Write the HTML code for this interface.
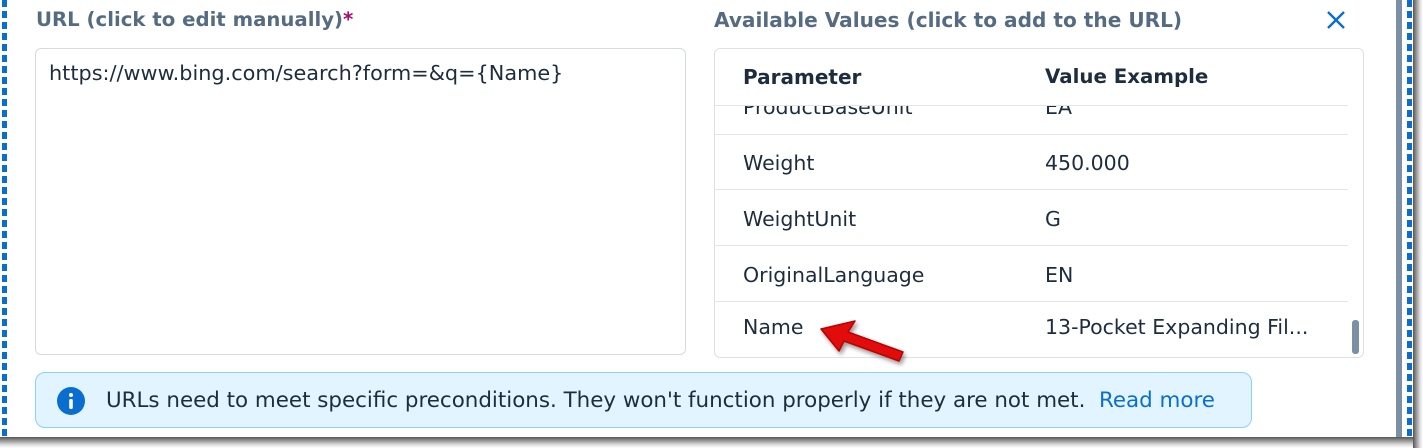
<!DOCTYPE html>
<html><head><style>
body{margin:0;width:1423px;height:448px;background:#fff;position:relative;overflow:hidden;font-family:"DejaVu Sans","Liberation Sans",sans-serif;color:#1d2d3e}
.a{position:absolute}
.dl{left:2px;top:0;width:5px;height:437px;background:repeating-linear-gradient(#0a6ed1 0 7px,#fff 7px 11px)}
.dr{left:1407px;top:0;width:5px;height:437px;background:repeating-linear-gradient(#0a6ed1 0 7px,#fff 7px 11px)}
.t{font-size:19.7px;font-weight:bold;color:#556b82;white-space:nowrap}
.row{position:absolute;left:0;width:633px;height:56px;border-bottom:1px solid #e5e5e5;font-size:20.5px}
.row span{position:absolute;top:17px}
</style></head><body>
<div class="a" style="left:0;top:437px;width:1423px;height:11px;background:linear-gradient(#555,#ddd 70%,#fff)"></div>
<div class="a" style="left:1413px;top:0;width:10px;height:448px;background:linear-gradient(90deg,#555,#ddd 70%,#fff)"></div>
<div class="a dl"></div>
<div class="a" style="left:1396px;top:0;width:6px;height:437px;background:#7b8fa5"></div>
<div class="a dr"></div>
<div class="a t" style="left:36px;top:8px">URL (click to edit manually)<span style="color:#aa0a6d">*</span></div>
<div class="a t" style="left:714px;top:8px;font-size:20.1px">Available Values (click to add to the URL)</div>
<svg class="a" style="left:1326px;top:10px" width="20" height="20"><path d="M2 2L18 18M18 2L2 18" stroke="#0a6ed1" stroke-width="2.4"/></svg>
<div class="a" style="left:35px;top:48px;width:649px;height:305px;border:1px solid #d5dadd;border-radius:6px"></div>
<div class="a" style="left:49px;top:61px;font-size:20.8px;white-space:nowrap">https://www.bing.com/search?form=&amp;q={Name}</div>
<div class="a" style="left:714px;top:48px;width:648px;height:308px;border:1px solid #e0e0e0;border-radius:6px;overflow:hidden">
 <div class="a" style="left:28px;top:16px;font-size:20px;font-weight:bold">Parameter</div>
 <div class="a" style="left:330px;top:16px;font-size:19.8px;font-weight:bold">Value Example</div>
 <div class="a" style="left:0;top:56px;width:633px;height:1px;background:#e5e5e5;z-index:2"></div>
 <div class="a" style="left:0;top:57px;width:648px;height:260px;overflow:hidden">
  <div class="row" style="top:-28px"><span style="left:28px">ProductBaseUnit</span><span style="left:330px">EA</span></div>
  <div class="row" style="top:28px;height:55px"><span style="left:28px">Weight</span><span style="left:330px">450.000</span></div>
  <div class="row" style="top:84px;height:55px"><span style="left:28px">WeightUnit</span><span style="left:330px">G</span></div>
  <div class="row" style="top:140px;height:55px"><span style="left:28px">OriginalLanguage</span><span style="left:330px">EN</span></div>
  <div class="row" style="top:196px;height:60px;border:none"><span style="left:28px;top:13px">Name</span><span style="left:330px;top:13px">13-Pocket Expanding Fil...</span></div>
 </div>
 <div class="a" style="left:637px;top:271px;width:7px;height:34px;background:#7b8fa5;border-radius:3px"></div>
</div>
<svg class="a" style="left:815px;top:315px;filter:drop-shadow(2px 3px 2px rgba(0,0,0,.4))" width="100" height="50"><path d="M6 14L40 6L33 17L88 37L84 46L29 26L24 36Z" fill="#e30c0c" stroke="#b00" stroke-width="1.5" stroke-linejoin="round"/></svg>
<div class="a" style="left:35px;top:372px;width:1215px;height:54px;background:#e1f4ff;border:1px solid #89d1ff;border-radius:10px"></div>
<svg class="a" style="left:57px;top:387px" width="28" height="28"><circle cx="14" cy="14" r="14" fill="#0a6ed1"/><circle cx="14" cy="8" r="2" fill="#fff"/><rect x="12.2" y="12" width="3.6" height="10" rx="1.5" fill="#fff"/></svg>
<div class="a" style="left:106px;top:388px;font-size:21.4px;white-space:nowrap">URLs need to meet specific preconditions. They won't function properly if they are not met.&nbsp;&nbsp;<span style="color:#0a6ed1">Read more</span></div>
</body></html>
